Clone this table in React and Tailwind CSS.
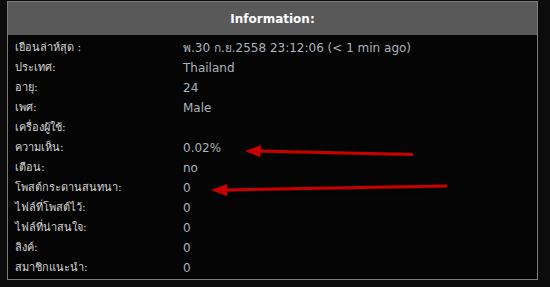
const rows = [
  ["เยือนล่าห์สุด :", "พ.30 ก.ย.2558 23:12:06 (< 1 min ago)"],
  ["ประเทศ:", "Thailand"],
  ["อายุ:", "24"],
  ["เพศ:", "Male"],
  ["เครื่องผู้ใช้:", ""],
  ["ความเห็น:", "0.02%"],
  ["เตือน:", "no"],
  ["โพสต์กระดานสนทนา:", "0"],
  ["ไฟล์ที่โพสต์ไว้:", "0"],
  ["ไฟล์ที่น่าสนใจ:", "0"],
  ["ลิงค์:", "0"],
  ["สมาชิกแนะนำ:", "0"],
];

// red arrows drawn over the table
function Arrows() {
  return (
    <svg className="absolute left-0 top-0 pointer-events-none" width="550" height="287">
      <defs>
        <filter id="sh" x="-10%" y="-50%" width="120%" height="200%">
          <feDropShadow dx="2" dy="3" stdDeviation="2" floodColor="#000" floodOpacity="0.9" />
        </filter>
      </defs>
      <g fill="#c80000" stroke="#c80000" filter="url(#sh)">
        <line x1="258" y1="151" x2="413" y2="154.5" strokeWidth="3" />
        <polygon points="245,151 261,145 260,157" stroke="none" />
        <line x1="224" y1="190" x2="447" y2="186" strokeWidth="3" />
        <polygon points="211,190 227,184 227,196" stroke="none" />
      </g>
    </svg>
  );
}

export default function App() {
  return (
    <div className="relative w-[550px] h-[287px] bg-[#0c0c0c] pl-[7px] pt-[1px] font-['DejaVu_Sans',Tahoma,sans-serif]">
      <div className="w-[531px] h-[279px] border border-[#7c7c7c] bg-[#050505]">
        <div className="h-[33px] bg-[#595959] flex items-center justify-center text-white text-[12px] font-bold">
          Information:
        </div>
        <div className="pt-[3px] pl-[7px]">
          {rows.map(([k, v]) => (
            <div key={k} className="flex h-[20px] items-center">
              <div className="w-[168px] text-[11px] text-[#d4d4d4]">{k}</div>
              <div className="text-[12px] text-[#aab3bc]">{v}</div>
            </div>
          ))}
        </div>
      </div>
      <Arrows />
    </div>
  );
}
